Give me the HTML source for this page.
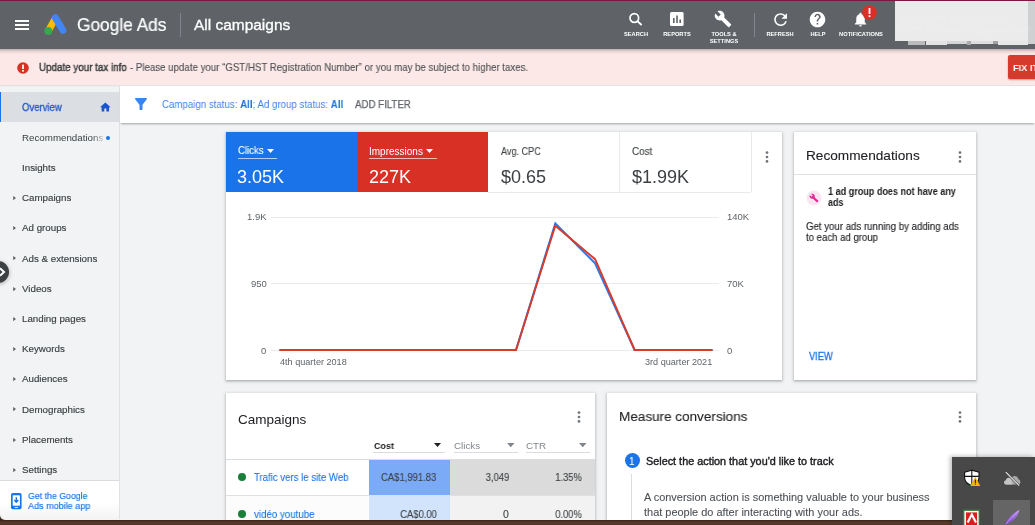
<!DOCTYPE html>
<html><head><meta charset="utf-8"><style>
html,body{margin:0;padding:0;width:1035px;height:525px;overflow:hidden;background:#eceef1;}
body{position:relative;font-family:"Liberation Sans",sans-serif;-webkit-font-smoothing:antialiased;}
.t{will-change:transform;}
.r{position:absolute;}
.t{position:absolute;white-space:nowrap;}
.t b{font-weight:700;}
.cap{font-size:5.7px;line-height:5.7px;color:#fff;font-weight:700;text-align:center;}
</style></head><body>
<div class="r" style="left:0px;top:0px;width:1035px;height:525px;background:#f1f3f4;"></div>
<div class="r" style="left:0px;top:0px;width:1035px;height:1px;background:#7b1846;"></div>
<div class="r" style="left:0px;top:1px;width:1035px;height:48px;background:#5f6368;"></div>
<div class="r" style="left:15px;top:20px;width:14px;height:2px;background:#ffffff;"></div>
<div class="r" style="left:15px;top:24px;width:14px;height:2px;background:#ffffff;"></div>
<div class="r" style="left:15px;top:28px;width:14px;height:2px;background:#ffffff;"></div>
<svg class="r" style="left:40px;top:10px" width="30" height="30" viewBox="0 0 30 30">
<path d="M15.6 7.9 L8.3 20.9" stroke="#fbbc04" stroke-width="6.9" stroke-linecap="butt"/>
<path d="M15.4 7.7 L22.9 20.3" stroke="#4285f4" stroke-width="6.9" stroke-linecap="round"/>
<circle cx="8.3" cy="20.9" r="3.9" fill="#34a853"/>
</svg>
<div class="t" style="top:17.05px;font-size:17.9px;line-height:17.9px;color:#ffffff;font-weight:400;left:76.7px;transform-origin:left top;transform:scaleX(0.9670);-webkit-text-stroke:0.2px #ffffff;">Google Ads</div>
<div class="r" style="left:180px;top:13px;width:1px;height:24px;background:#80868b;"></div>
<div class="t" style="top:17.20px;font-size:15px;line-height:15px;color:#ffffff;font-weight:400;left:193.8px;transform-origin:left top;transform:scaleX(1.0302);-webkit-text-stroke:0.3px #ffffff;">All campaigns</div>
<div class="t cap" style="left:596px;width:80px;top:32.17px;">SEARCH</div>
<div class="t cap" style="left:636.5px;width:80px;top:32.17px;">REPORTS</div>
<div class="t cap" style="left:683.5px;width:80px;top:32.17px;">TOOLS &amp;</div>
<div class="t cap" style="left:683.5px;width:80px;top:38.67px;">SETTINGS</div>
<div class="t cap" style="left:740px;width:80px;top:32.17px;">REFRESH</div>
<div class="t cap" style="left:777.5px;width:80px;top:32.17px;">HELP</div>
<div class="t cap" style="left:820.7px;width:80px;top:32.17px;">NOTIFICATIONS</div>
<div class="r" style="left:754px;top:13px;width:1px;height:24px;background:#80868b;"></div>
<svg class="r" style="left:628px;top:12px" width="16" height="15" viewBox="0 0 16 15">
<circle cx="6.3" cy="6" r="4.3" fill="none" stroke="#fff" stroke-width="1.7"/>
<path d="M9.4 9.1 L13.6 13" stroke="#fff" stroke-width="1.9"/>
</svg>
<svg class="r" style="left:670px;top:12px" width="15" height="15" viewBox="0 0 15 15">
<rect x="0" y="0" width="13.6" height="13.9" rx="1.5" fill="#fff"/>
<rect x="3" y="6" width="1.6" height="5" fill="#5f6368"/>
<rect x="6.2" y="3.5" width="1.6" height="7.5" fill="#5f6368"/>
<rect x="9.4" y="7.5" width="1.6" height="3.5" fill="#5f6368"/>
</svg>
<svg class="r" style="left:714px;top:10px" width="18" height="18" viewBox="0 0 24 24">
<path fill="#fff" d="M22.7 19l-9.1-9.1c.9-2.3.4-5-1.5-6.9-2-2-5-2.4-7.4-1.3L9 6 6 9 1.6 4.7C.4 7.1.9 10.1 2.9 12.1c1.9 1.9 4.6 2.4 6.9 1.5l9.1 9.1c.4.4 1 .4 1.4 0l2.3-2.3c.5-.4.5-1.1.1-1.4z"/>
</svg>
<svg class="r" style="left:770.7px;top:9.5px" width="19.2" height="19.2" viewBox="0 0 24 24">
<path fill="#fff" d="M17.65 6.35A7.958 7.958 0 0 0 12 4c-4.42 0-7.99 3.58-7.99 8s3.57 8 7.99 8c3.73 0 6.84-2.55 7.73-6h-2.08A5.99 5.99 0 0 1 12 18c-3.31 0-6-2.69-6-6s2.69-6 6-6c1.66 0 3.14.69 4.22 1.78L13 11h7V4l-2.35 2.35z"/>
</svg>
<svg class="r" style="left:809px;top:11px" width="17" height="17" viewBox="0 0 24 24">
<path fill="#fff" d="M12 1C5.9 1 1 5.9 1 12s4.9 11 11 11 11-4.9 11-11S18.1 1 12 1zm1 18h-2.2v-2.2H13V19zm2.3-8.4l-1 1c-.8.8-1.3 1.5-1.3 3.3h-2.2v-.6c0-1.2.5-2.3 1.3-3.1l1.4-1.4c.4-.4.6-.9.6-1.5 0-1.2-1-2.2-2.2-2.2S9.8 7.1 9.8 8.3H7.7c0-2.4 2-4.4 4.4-4.4s4.4 2 4.4 4.4c0 .9-.4 1.7-1.2 2.3z"/>
</svg>
<svg class="r" style="left:852px;top:11px" width="17" height="17" viewBox="0 0 24 24">
<path fill="#fff" d="M12 22c1.1 0 2-.9 2-2h-4c0 1.1.9 2 2 2zm6-6v-5c0-3.07-1.64-5.64-4.5-6.32V4c0-.83-.67-1.5-1.5-1.5s-1.5.67-1.5 1.5v.68C7.63 5.36 6 7.92 6 11v5l-2 2v1h16v-1l-2-2z"/>
</svg>
<svg class="r" style="left:862px;top:5px" width="15" height="15" viewBox="0 0 15 15">
<circle cx="7.5" cy="7.5" r="7.3" fill="#d93025"/>
<rect x="6.6" y="3" width="1.8" height="6" fill="#fff"/>
<rect x="6.6" y="10.3" width="1.8" height="1.8" fill="#fff"/>
</svg>
<div class="r" style="left:895px;top:1px;width:133px;height:40px;background:#ebebeb;"></div>
<div class="r" style="left:1028px;top:1px;width:7px;height:43px;background:#cfd0d1;"></div>
<div class="r" style="left:908px;top:41px;width:17px;height:3.5px;background:#b9bbbd;"></div>
<div class="r" style="left:926px;top:41px;width:21px;height:4.3px;background:#e3e3e3;"></div>
<div class="r" style="left:947px;top:41px;width:20px;height:3px;background:#d5d6d7;"></div>
<div class="r" style="left:967px;top:41px;width:4px;height:3.5px;background:#a9abad;"></div>
<div class="r" style="left:971px;top:41px;width:22px;height:3px;background:#dedede;"></div>
<div class="r" style="left:993px;top:41px;width:5px;height:3px;background:#9fa1a3;"></div>
<div class="r" style="left:998px;top:41px;width:30px;height:3.5px;background:#e6e6e6;"></div>
<div class="t" style="top:14.54px;font-size:10px;line-height:10px;color:#f7f7f7;font-weight:400;left:899px;transform-origin:left top;opacity:.2;">691-7** ***  Restructions...</div>
<div class="t" style="top:25.04px;font-size:10px;line-height:10px;color:#f7f7f7;font-weight:400;left:900px;transform-origin:left top;opacity:.2;">an*** ****  mno***@gmail.com</div>
<div class="r" style="left:0px;top:49px;width:1035px;height:36px;background:#fce8e6;"></div>
<div class="r" style="left:0px;top:49px;width:1035px;height:5px;background:linear-gradient(to bottom,rgba(60,64,67,.35),rgba(60,64,67,.12) 45%,rgba(60,64,67,0));"></div>
<svg class="r" style="left:17px;top:62px" width="12" height="12" viewBox="0 0 12 12">
<circle cx="6" cy="6" r="5.8" fill="#d93025"/>
<rect x="5.1" y="2.6" width="1.8" height="4.4" fill="#fff"/>
<rect x="5.1" y="8" width="1.8" height="1.6" fill="#fff"/>
</svg>
<div class="t" style="top:61.66px;font-size:10.8px;line-height:10.8px;color:#3c4043;font-weight:400;left:39px;transform-origin:left top;transform:scaleX(0.9094);-webkit-text-stroke:0.45px #3c4043;">Update your tax info</div>
<div class="t" style="top:61.66px;font-size:10.8px;line-height:10.8px;color:#4d5156;font-weight:400;left:130px;transform-origin:left top;transform:scaleX(0.8970);-webkit-text-stroke:0.12px #4d5156;">- Please update your “GST/HST Registration Number” or you may be subject to higher taxes.</div>
<div class="r" style="left:1008px;top:55px;width:30px;height:24px;background:#d63a2c;border-radius:2px;box-shadow:0 1px 2px rgba(0,0,0,.3);"></div>
<div class="t" style="top:62.90px;font-size:9.8px;line-height:9.8px;color:#ffffff;font-weight:700;left:1013px;transform-origin:left top;transform:scaleX(0.9371);">FIX IT</div>
<div class="r" style="left:0px;top:85px;width:119px;height:434px;background:#f1f3f4;"></div>
<div class="r" style="left:0px;top:85px;width:1035px;height:1.5px;background:linear-gradient(to bottom,rgba(60,64,67,.12),rgba(60,64,67,0));"></div>
<div class="r" style="left:119px;top:86px;width:1px;height:433px;background:#e0e2e5;"></div>
<div class="r" style="left:0px;top:92px;width:119px;height:30px;background:#dbdee2;"></div>
<div class="r" style="left:0px;top:92px;width:1.2px;height:30px;background:#1a73e8;"></div>
<div class="t" style="top:101.81px;font-size:10.5px;line-height:10.5px;color:#1a56c8;font-weight:400;left:22.4px;transform-origin:left top;transform:scaleX(0.9072);-webkit-text-stroke:0.28px #1a56c8;">Overview</div>
<svg class="r" style="left:99px;top:100.9px" width="12.7" height="12.7" viewBox="0 0 24 24">
<path d="M10 20v-6h4v6h5v-8h3L12 3 2 12h3v8z" fill="#1a56c8"/>
</svg>
<div class="t" style="top:133.15px;font-size:9.75px;line-height:9.75px;color:#3c4043;font-weight:400;left:22.3px;transform-origin:left top;width:82px;overflow:hidden;white-space:nowrap;-webkit-mask-image:linear-gradient(to right,#000 70px,transparent 84px);">Recommendations</div>
<div class="t" style="top:163.15px;font-size:9.75px;line-height:9.75px;color:#3c4043;font-weight:400;left:22.3px;transform-origin:left top;-webkit-text-stroke:0.15px #3c4043;">Insights</div>
<div class="t" style="top:193.25px;font-size:9.75px;line-height:9.75px;color:#3c4043;font-weight:400;left:22.3px;transform-origin:left top;-webkit-text-stroke:0.15px #3c4043;">Campaigns</div>
<svg class="r" style="left:13.2px;top:196.1px" width="4" height="5" viewBox="0 0 4 5"><path d="M0.2 0 L3 2.1 L0.2 4.2 Z" fill="#5f6368"/></svg>
<div class="t" style="top:223.45px;font-size:9.75px;line-height:9.75px;color:#3c4043;font-weight:400;left:22.3px;transform-origin:left top;-webkit-text-stroke:0.15px #3c4043;">Ad groups</div>
<svg class="r" style="left:13.2px;top:226.3px" width="4" height="5" viewBox="0 0 4 5"><path d="M0.2 0 L3 2.1 L0.2 4.2 Z" fill="#5f6368"/></svg>
<div class="t" style="top:253.55px;font-size:9.75px;line-height:9.75px;color:#3c4043;font-weight:400;left:22.3px;transform-origin:left top;-webkit-text-stroke:0.15px #3c4043;">Ads &amp; extensions</div>
<svg class="r" style="left:13.2px;top:256.4px" width="4" height="5" viewBox="0 0 4 5"><path d="M0.2 0 L3 2.1 L0.2 4.2 Z" fill="#5f6368"/></svg>
<div class="t" style="top:283.75px;font-size:9.75px;line-height:9.75px;color:#3c4043;font-weight:400;left:22.3px;transform-origin:left top;-webkit-text-stroke:0.15px #3c4043;">Videos</div>
<svg class="r" style="left:13.2px;top:286.6px" width="4" height="5" viewBox="0 0 4 5"><path d="M0.2 0 L3 2.1 L0.2 4.2 Z" fill="#5f6368"/></svg>
<div class="t" style="top:313.95px;font-size:9.75px;line-height:9.75px;color:#3c4043;font-weight:400;left:22.3px;transform-origin:left top;-webkit-text-stroke:0.15px #3c4043;">Landing pages</div>
<svg class="r" style="left:13.2px;top:316.8px" width="4" height="5" viewBox="0 0 4 5"><path d="M0.2 0 L3 2.1 L0.2 4.2 Z" fill="#5f6368"/></svg>
<div class="t" style="top:344.15px;font-size:9.75px;line-height:9.75px;color:#3c4043;font-weight:400;left:22.3px;transform-origin:left top;-webkit-text-stroke:0.15px #3c4043;">Keywords</div>
<svg class="r" style="left:13.2px;top:347.0px" width="4" height="5" viewBox="0 0 4 5"><path d="M0.2 0 L3 2.1 L0.2 4.2 Z" fill="#5f6368"/></svg>
<div class="t" style="top:374.35px;font-size:9.75px;line-height:9.75px;color:#3c4043;font-weight:400;left:22.3px;transform-origin:left top;-webkit-text-stroke:0.15px #3c4043;">Audiences</div>
<svg class="r" style="left:13.2px;top:377.2px" width="4" height="5" viewBox="0 0 4 5"><path d="M0.2 0 L3 2.1 L0.2 4.2 Z" fill="#5f6368"/></svg>
<div class="t" style="top:404.55px;font-size:9.75px;line-height:9.75px;color:#3c4043;font-weight:400;left:22.3px;transform-origin:left top;-webkit-text-stroke:0.15px #3c4043;">Demographics</div>
<svg class="r" style="left:13.2px;top:407.4px" width="4" height="5" viewBox="0 0 4 5"><path d="M0.2 0 L3 2.1 L0.2 4.2 Z" fill="#5f6368"/></svg>
<div class="t" style="top:434.75px;font-size:9.75px;line-height:9.75px;color:#3c4043;font-weight:400;left:22.3px;transform-origin:left top;-webkit-text-stroke:0.15px #3c4043;">Placements</div>
<svg class="r" style="left:13.2px;top:437.6px" width="4" height="5" viewBox="0 0 4 5"><path d="M0.2 0 L3 2.1 L0.2 4.2 Z" fill="#5f6368"/></svg>
<div class="t" style="top:464.95px;font-size:9.75px;line-height:9.75px;color:#3c4043;font-weight:400;left:22.3px;transform-origin:left top;-webkit-text-stroke:0.15px #3c4043;">Settings</div>
<svg class="r" style="left:13.2px;top:467.8px" width="4" height="5" viewBox="0 0 4 5"><path d="M0.2 0 L3 2.1 L0.2 4.2 Z" fill="#5f6368"/></svg>
<div class="r" style="left:106px;top:135.5px;width:4px;height:4px;background:#1a73e8;border-radius:50%;"></div>
<div class="r" style="left:0px;top:512px;width:8px;height:8px;background:#3a2519;"></div>
<div class="r" style="left:0px;top:480px;width:119px;height:40px;background:linear-gradient(to bottom, #fff 0%, #fff 55%, #f3f3f3 100%);border-top:1px solid #dadce0;box-sizing:border-box;border-bottom-left-radius:5px;"></div>
<svg class="r" style="left:10.9px;top:492.5px" width="11" height="17" viewBox="0 0 11 17">
<rect x="0" y="0" width="10.6" height="16.3" rx="1.8" fill="#1a73e8"/>
<rect x="1.7" y="2.3" width="7.2" height="10.4" fill="#fff"/>
<path d="M5.3 4.2 V9 M3.3 7 L5.3 9.3 L7.3 7" stroke="#1a73e8" stroke-width="1.4" fill="none"/>
<rect x="3.7" y="13.9" width="3.2" height="0.9" fill="#fff"/>
</svg>
<div class="t" style="top:490.57px;font-size:9.6px;line-height:9.6px;color:#1a73e8;font-weight:400;left:28.4px;transform-origin:left top;transform:scaleX(0.9138);-webkit-text-stroke:0.15px #1a73e8;">Get the Google</div>
<div class="t" style="top:500.67px;font-size:9.6px;line-height:9.6px;color:#1a73e8;font-weight:400;left:28.4px;transform-origin:left top;transform:scaleX(0.9429);-webkit-text-stroke:0.15px #1a73e8;">Ads mobile app</div>
<svg class="r" style="left:-13px;top:261px;filter:drop-shadow(0 1px 2px rgba(0,0,0,.3))" width="22" height="22" viewBox="0 0 22 22">
<circle cx="11" cy="11" r="11" fill="#3c4043"/>
<path d="M13 7.3 L17 11 L13 14.7" stroke="#fff" stroke-width="2" fill="none"/>
</svg>
<div class="r" style="left:120px;top:86px;width:915px;height:37px;background:#ffffff;box-shadow:0 2px 2px -1px rgba(60,64,67,.45);"></div>
<svg class="r" style="left:132px;top:95px" width="18" height="18" viewBox="0 0 24 24">
<path d="M4.25 5.61C6.27 8.2 10 13 10 13v6c0 .55.45 1 1 1h2c.55 0 1-.45 1-1v-6s3.72-4.8 5.74-7.39A.998.998 0 0 0 18.95 4H5.04c-.83 0-1.3.95-.79 1.61z" fill="#3b82f2"/>
</svg>
<div class="t" style="top:99.06px;font-size:10.8px;line-height:10.8px;color:#3d84f0;font-weight:400;left:162px;transform-origin:left top;transform:scaleX(0.8984);">Campaign status: <b style="color:#1a6fe0">All</b>; Ad group status: <b style="color:#1a6fe0">All</b></div>
<div class="t" style="top:100.20px;font-size:10.4px;line-height:10.4px;color:#5f6368;font-weight:400;left:355.4px;transform-origin:left top;transform:scaleX(0.9332);-webkit-text-stroke:0.25px #5f6368;">ADD FILTER</div>
<div class="r" style="left:226px;top:132px;width:556px;height:248px;background:#ffffff;box-shadow:0 1px 2px rgba(60,64,67,.3),0 1px 3px 1px rgba(60,64,67,.15);"></div>
<div class="r" style="left:226px;top:132px;width:131px;height:60px;background:#1a73e8;"></div>
<div class="r" style="left:357px;top:132px;width:131px;height:60px;background:#d93025;"></div>
<div class="r" style="left:488px;top:192px;width:263px;height:1px;background:#e8eaed;"></div>
<div class="r" style="left:619px;top:132px;width:1px;height:60px;background:#e8eaed;"></div>
<div class="r" style="left:751px;top:132px;width:1px;height:60px;background:#e8eaed;"></div>
<div class="t" style="top:146.20px;font-size:10.4px;line-height:10.4px;color:#ffffff;font-weight:400;left:237.6px;transform-origin:left top;transform:scaleX(0.9231);-webkit-text-stroke:0.1px #ffffff;">Clicks</div>
<div class="r" style="left:237.6px;top:158px;width:39.2px;height:1px;background:rgba(255,255,255,.65);"></div>
<svg class="r" style="left:267px;top:149.2px" width="8" height="5" viewBox="0 0 8 5"><path d="M0 0 H7 L3.5 4Z" fill="#fff"/></svg>
<div class="t" style="top:167.76px;font-size:18px;line-height:18px;color:#ffffff;font-weight:400;left:236.8px;transform-origin:left top;">3.05K</div>
<div class="t" style="top:146.53px;font-size:10px;line-height:10px;color:#ffffff;font-weight:400;left:369px;transform-origin:left top;">Impressions</div>
<div class="r" style="left:369px;top:158px;width:67.5px;height:1px;background:rgba(255,255,255,.65);"></div>
<svg class="r" style="left:426.2px;top:149.2px" width="8" height="5" viewBox="0 0 8 5"><path d="M0 0 H7 L3.5 4Z" fill="#fff"/></svg>
<div class="t" style="top:167.76px;font-size:18px;line-height:18px;color:#ffffff;font-weight:400;left:369px;transform-origin:left top;">227K</div>
<div class="t" style="top:146.53px;font-size:10px;line-height:10px;color:#3c4043;font-weight:400;left:501px;transform-origin:left top;transform:scaleX(0.9103);-webkit-text-stroke:0.1px #3c4043;">Avg. CPC</div>
<div class="t" style="top:167.76px;font-size:18px;line-height:18px;color:#3c4043;font-weight:400;left:501px;transform-origin:left top;">$0.65</div>
<div class="t" style="top:146.53px;font-size:10px;line-height:10px;color:#3c4043;font-weight:400;left:632px;transform-origin:left top;transform:scaleX(0.9824);-webkit-text-stroke:0.1px #3c4043;">Cost</div>
<div class="t" style="top:167.76px;font-size:18px;line-height:18px;color:#3c4043;font-weight:400;left:632px;transform-origin:left top;">$1.99K</div>
<svg class="r" style="left:764.6px;top:151px" width="4" height="12" viewBox="0 0 4 12"><circle cx="2" cy="1.6" r="1.35" fill="#6f7479"/><circle cx="2" cy="6" r="1.35" fill="#6f7479"/><circle cx="2" cy="10.4" r="1.35" fill="#6f7479"/></svg>
<div class="r" style="left:271px;top:217px;width:448px;height:1px;background:#e8eaed;"></div>
<div class="r" style="left:271px;top:283px;width:448px;height:1px;background:#e8eaed;"></div>
<div class="r" style="left:271px;top:350px;width:448px;height:1px;background:#e8eaed;"></div>
<div class="t" style="top:212.46px;font-size:9.5px;line-height:9.5px;color:#5f6368;font-weight:400;right:768.4px;text-align:right;transform-origin:right top;">1.9K</div>
<div class="t" style="top:278.96px;font-size:9.5px;line-height:9.5px;color:#5f6368;font-weight:400;right:768.4px;text-align:right;transform-origin:right top;">950</div>
<div class="t" style="top:345.76px;font-size:9.5px;line-height:9.5px;color:#5f6368;font-weight:400;right:768.4px;text-align:right;transform-origin:right top;">0</div>
<div class="t" style="top:212.46px;font-size:9.5px;line-height:9.5px;color:#5f6368;font-weight:400;left:726.6px;transform-origin:left top;">140K</div>
<div class="t" style="top:278.96px;font-size:9.5px;line-height:9.5px;color:#5f6368;font-weight:400;left:726.6px;transform-origin:left top;">70K</div>
<div class="t" style="top:345.76px;font-size:9.5px;line-height:9.5px;color:#5f6368;font-weight:400;left:726.6px;transform-origin:left top;">0</div>
<div class="t" style="top:357.80px;font-size:9.1px;line-height:9.1px;color:#5f6368;font-weight:400;left:280px;transform-origin:left top;">4th quarter 2018</div>
<div class="t" style="top:357.80px;font-size:9.1px;line-height:9.1px;color:#5f6368;font-weight:400;right:322.70000000000005px;text-align:right;transform-origin:right top;">3rd quarter 2021</div>
<svg class="r" style="left:0;top:0" width="1035" height="525" viewBox="0 0 1035 525">
<polyline points="279.5,350 516,350 555.3,223.3 595.1,263.4 634.6,350 712.5,350" fill="none" stroke="#2a7be9" stroke-width="2"/>
<polyline points="279.5,350 516,350 555.3,225.7 595.1,259.2 634.6,350 712.5,350" fill="none" stroke="#d93a2b" stroke-width="1.9"/>
</svg>
<div class="r" style="left:794px;top:132px;width:182px;height:248px;background:#ffffff;box-shadow:0 1px 2px rgba(60,64,67,.3),0 1px 3px 1px rgba(60,64,67,.15);"></div>
<div class="r" style="left:794px;top:174px;width:182px;height:1px;background:#e0e0e0;"></div>
<div class="t" style="top:149.15px;font-size:13.65px;line-height:13.65px;color:#202124;font-weight:400;left:806.4px;transform-origin:left top;transform:scaleX(0.9982);-webkit-text-stroke:0.1px #202124;">Recommendations</div>
<svg class="r" style="left:958.2px;top:151px" width="4" height="12" viewBox="0 0 4 12"><circle cx="2" cy="1.6" r="1.35" fill="#6f7479"/><circle cx="2" cy="6" r="1.35" fill="#6f7479"/><circle cx="2" cy="10.4" r="1.35" fill="#6f7479"/></svg>
<svg class="r" style="left:806px;top:189.5px" width="16" height="16" viewBox="0 0 16 16">
<circle cx="8" cy="8" r="7.4" fill="#fce4f1"/>
<g transform="translate(3.2,3.2) scale(0.4)"><path fill="#e52592" d="M22.7 19l-9.1-9.1c.9-2.3.4-5-1.5-6.9-2-2-5-2.4-7.4-1.3L9 6 6 9 1.6 4.7C.4 7.1.9 10.1 2.9 12.1c1.9 1.9 4.6 2.4 6.9 1.5l9.1 9.1c.4.4 1 .4 1.4 0l2.3-2.3c.5-.4.5-1.1.1-1.4z"/></g>
</svg>
<div class="t" style="top:186.67px;font-size:10.2px;line-height:10.2px;color:#202124;font-weight:700;left:827.9px;transform-origin:left top;transform:scaleX(0.8891);">1 ad group does not have any</div>
<div class="t" style="top:197.67px;font-size:10.2px;line-height:10.2px;color:#202124;font-weight:700;left:827.9px;transform-origin:left top;transform:scaleX(0.8705);">ads</div>
<div class="t" style="top:221.87px;font-size:10.2px;line-height:10.2px;color:#202124;font-weight:400;left:806.4px;transform-origin:left top;transform:scaleX(0.9467);-webkit-text-stroke:0.12px #202124;">Get your ads running by adding ads</div>
<div class="t" style="top:233.17px;font-size:10.2px;line-height:10.2px;color:#202124;font-weight:400;left:806.4px;transform-origin:left top;transform:scaleX(0.9404);-webkit-text-stroke:0.12px #202124;">to each ad group</div>
<div class="t" style="top:352.07px;font-size:10.2px;line-height:10.2px;color:#1a73e8;font-weight:400;left:809.2px;transform-origin:left top;transform:scaleX(0.9053);-webkit-text-stroke:0.3px #1a73e8;">VIEW</div>
<div class="r" style="left:226px;top:393px;width:369px;height:132px;background:#ffffff;box-shadow:0 1px 2px rgba(60,64,67,.3),0 1px 3px 1px rgba(60,64,67,.15);"></div>
<div class="t" style="top:412.77px;font-size:13.5px;line-height:13.5px;color:#202124;font-weight:400;left:237.6px;transform-origin:left top;">Campaigns</div>
<svg class="r" style="left:577px;top:411px" width="4" height="12" viewBox="0 0 4 12"><circle cx="2" cy="1.6" r="1.35" fill="#6f7479"/><circle cx="2" cy="6" r="1.35" fill="#6f7479"/><circle cx="2" cy="10.4" r="1.35" fill="#6f7479"/></svg>
<div class="t" style="top:440.70px;font-size:9.8px;line-height:9.8px;color:#202124;font-weight:700;left:373.6px;transform-origin:left top;transform:scaleX(0.9183);">Cost</div>
<div class="r" style="left:373px;top:452px;width:72px;height:1px;background:#dadce0;"></div>
<svg class="r" style="left:434px;top:443.2px" width="7" height="4" viewBox="0 0 7 4"><path d="M0 0 H7 L3.5 3.9Z" fill="#202124"/></svg>
<div class="t" style="top:440.70px;font-size:9.8px;line-height:9.8px;color:#80868b;font-weight:400;left:453.6px;transform-origin:left top;">Clicks</div>
<div class="r" style="left:453.6px;top:452px;width:64px;height:1px;background:#dadce0;"></div>
<svg class="r" style="left:506.5px;top:443.3px" width="8" height="5" viewBox="0 0 8 5"><path d="M0 0 H7.5 L3.75 4.2Z" fill="#80868b"/></svg>
<div class="t" style="top:440.70px;font-size:9.8px;line-height:9.8px;color:#80868b;font-weight:400;left:526.3px;transform-origin:left top;">CTR</div>
<div class="r" style="left:526.3px;top:452px;width:64px;height:1px;background:#dadce0;"></div>
<svg class="r" style="left:579px;top:443.3px" width="8" height="5" viewBox="0 0 8 5"><path d="M0 0 H7.5 L3.75 4.2Z" fill="#80868b"/></svg>
<div class="r" style="left:226px;top:459px;width:369px;height:1px;background:#dadce0;"></div>
<div class="r" style="left:368.7px;top:460px;width:81px;height:35px;background:#7baaf7;"></div>
<div class="r" style="left:449.7px;top:460px;width:145px;height:35px;background:#dbdbdb;"></div>
<div class="r" style="left:226px;top:495px;width:369px;height:1px;background:#e0e0e0;"></div>
<div class="r" style="left:226px;top:496px;width:142.7px;height:29px;background:#fcfcfc;"></div>
<div class="r" style="left:368.7px;top:496px;width:81px;height:29px;background:#d2e3fc;"></div>
<div class="r" style="left:449.7px;top:496px;width:145px;height:29px;background:#f2f2f2;"></div>
<div class="r" style="left:238.4px;top:473px;width:8px;height:8px;background:#188038;border-radius:50%;"></div>
<div class="t" style="top:472.33px;font-size:10.6px;line-height:10.6px;color:#1a73e8;font-weight:400;left:253.8px;transform-origin:left top;transform:scaleX(0.9073);-webkit-text-stroke:0.1px #1a73e8;">Trafic vers le site Web</div>
<div class="t" style="top:472.41px;font-size:10.5px;line-height:10.5px;color:#3c4043;font-weight:400;right:598.3px;text-align:right;transform-origin:right top;transform:scaleX(0.9021);-webkit-text-stroke:0.1px #3c4043;">CA$1,991.83</div>
<div class="t" style="top:472.41px;font-size:10.5px;line-height:10.5px;color:#3c4043;font-weight:400;right:525.7px;text-align:right;transform-origin:right top;transform:scaleX(0.8981);-webkit-text-stroke:0.1px #3c4043;">3,049</div>
<div class="t" style="top:472.41px;font-size:10.5px;line-height:10.5px;color:#3c4043;font-weight:400;right:453px;text-align:right;transform-origin:right top;transform:scaleX(0.8901);-webkit-text-stroke:0.1px #3c4043;">1.35%</div>
<div class="r" style="left:238.4px;top:509.5px;width:8px;height:8px;background:#188038;border-radius:50%;"></div>
<div class="t" style="top:508.83px;font-size:10.6px;line-height:10.6px;color:#1a73e8;font-weight:400;left:253.6px;transform-origin:left top;transform:scaleX(0.9181);-webkit-text-stroke:0.1px #1a73e8;">vidéo youtube</div>
<div class="t" style="top:508.91px;font-size:10.5px;line-height:10.5px;color:#3c4043;font-weight:400;right:598.3px;text-align:right;transform-origin:right top;transform:scaleX(0.8957);-webkit-text-stroke:0.1px #3c4043;">CA$0.00</div>
<div class="t" style="top:508.91px;font-size:10.5px;line-height:10.5px;color:#3c4043;font-weight:400;right:525.7px;text-align:right;transform-origin:right top;-webkit-text-stroke:0.1px #3c4043;">0</div>
<div class="t" style="top:508.91px;font-size:10.5px;line-height:10.5px;color:#3c4043;font-weight:400;right:453px;text-align:right;transform-origin:right top;transform:scaleX(0.8901);-webkit-text-stroke:0.1px #3c4043;">0.00%</div>
<div class="r" style="left:607px;top:393px;width:369px;height:132px;background:#ffffff;box-shadow:0 1px 2px rgba(60,64,67,.3),0 1px 3px 1px rgba(60,64,67,.15);"></div>
<div class="t" style="top:409.70px;font-size:13.7px;line-height:13.7px;color:#202124;font-weight:400;left:618.8px;transform-origin:left top;transform:scaleX(0.9868);-webkit-text-stroke:0.1px #202124;">Measure conversions</div>
<svg class="r" style="left:958px;top:410.5px" width="4" height="12" viewBox="0 0 4 12"><circle cx="2" cy="1.6" r="1.35" fill="#6f7479"/><circle cx="2" cy="6" r="1.35" fill="#6f7479"/><circle cx="2" cy="10.4" r="1.35" fill="#6f7479"/></svg>
<div class="r" style="left:624.7px;top:453px;width:15.4px;height:15.4px;background:#1a73e8;border-radius:50%;"></div>
<div class="t" style="top:456.54px;font-size:10px;line-height:10px;color:#ffffff;font-weight:400;left:629.3px;transform-origin:left top;">1</div>
<div class="t" style="top:455.86px;font-size:10.8px;line-height:10.8px;color:#202124;font-weight:400;left:645.8px;transform-origin:left top;transform:scaleX(1.0034);-webkit-text-stroke:0.4px #202124;">Select the action that you'd like to track</div>
<div class="r" style="left:631px;top:474px;width:1px;height:51px;background:#dadce0;"></div>
<div class="t" style="top:492.37px;font-size:10.9px;line-height:10.9px;color:#4d5156;font-weight:400;left:643.7px;transform-origin:left top;transform:scaleX(1.0036);-webkit-text-stroke:0.1px #4d5156;">A conversion action is something valuable to your business</div>
<div class="t" style="top:507.37px;font-size:10.9px;line-height:10.9px;color:#4d5156;font-weight:400;left:643.7px;transform-origin:left top;transform:scaleX(1.0054);-webkit-text-stroke:0.1px #4d5156;">that people do after interacting with your ads.</div>
<div class="r" style="left:0px;top:519.7px;width:1035px;height:6px;background:linear-gradient(to bottom,#3a2519 0%,#5a3b2a 45%,#4a3122 100%);"></div>
<div class="r" style="left:952px;top:457px;width:83px;height:68px;background:#484848;box-shadow:-2px -1px 4px rgba(0,0,0,.25);"></div>
<div class="r" style="left:993px;top:500px;width:37px;height:25px;background:#656565;"></div>
<svg class="r" style="left:963px;top:469px" width="18" height="18" viewBox="0 0 18 18">
<path d="M1.6 3.2 L8.8 1.1 L16 3.2 L16 8.6 C16 12.3 12.8 15 8.4 16.6 C4.2 15 1.6 12.3 1.6 8.6 Z" fill="#fff" stroke="#111" stroke-width="1.1"/>
<path d="M8.8 1.2 V16.2 M1.8 7.4 H15.8" stroke="#111" stroke-width="1.1"/>
<path d="M12.3 7.8 L17.3 16.9 H7.3 Z" fill="#f7b500"/>
<rect x="11.85" y="10.6" width="1" height="3.3" fill="#111"/><rect x="11.85" y="14.6" width="1" height="1" fill="#111"/>
</svg>
<svg class="r" style="left:1003px;top:471px" width="19" height="16" viewBox="0 0 19 16">
<path d="M3 13.5 C0.8 13.5 0.4 10 2.8 9.6 C3.2 6.8 6.2 6 8 7.4 C9.2 4.2 14.6 3.8 15.4 8.2 C17.8 8.4 18.2 13.5 15.6 13.5 Z" fill="#a9a9a9"/>
<path d="M3 13.5 C0.8 13.5 0.4 10 2.8 9.6 C3.2 6.8 6.2 6 8 7.4 L9.5 13.5 Z" fill="#c4c4c4"/>
<path d="M2.8 1.2 L16.2 14.6" stroke="#4a4a4a" stroke-width="2.2"/>
<path d="M2.8 1.2 L16.2 14.6" stroke="#e6e6e6" stroke-width="1.1"/>
</svg>
<svg class="r" style="left:963px;top:509px" width="18" height="16" viewBox="0 0 18 16">
<rect x="0" y="0.5" width="17" height="16" fill="#2f7d3a"/>
<rect x="1.4" y="1.9" width="14.2" height="15" fill="#fff"/>
<rect x="2.9" y="3.4" width="11.2" height="13" fill="#d81e1e"/>
<path d="M4.6 13.6 L8.8 5.6 L13 13.6" stroke="#fff" stroke-width="2.2" fill="none" stroke-linejoin="miter"/>
</svg>
<svg class="r" style="left:1004px;top:509px" width="17" height="16" viewBox="0 0 17 16">
<defs><linearGradient id="fg" x1="0" y1="1" x2="1" y2="0"><stop offset="0" stop-color="#7b3fc8"/><stop offset="1" stop-color="#b68cf0"/></linearGradient></defs>
<path d="M0.5 16 C3 10.5 8 4.5 15.5 0.8 C14.5 6.5 10 12 3.6 14.6 Z" fill="url(#fg)"/>
<path d="M2 15 C6 10 10 6 14.5 2" stroke="#d9c4f7" stroke-width="0.6" fill="none"/>
</svg>
</body></html>
